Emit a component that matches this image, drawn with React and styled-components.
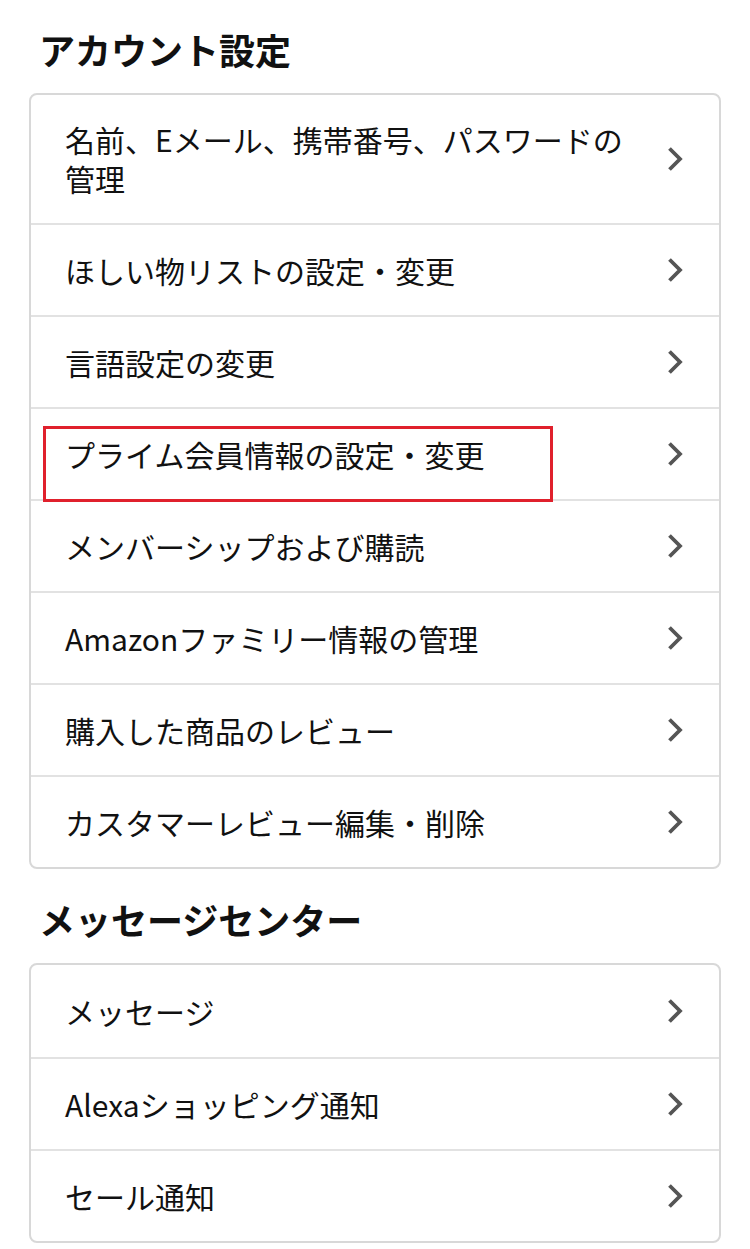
import React from 'react'
import styled, { createGlobalStyle } from 'styled-components';

const sections = [
  {
    title: 'アカウント設定',
    items: [
      { label: '名前、Eメール、携帯番号、パスワードの管理' },
      { label: 'ほしい物リストの設定・変更' },
      { label: '言語設定の変更' },
      { label: 'プライム会員情報の設定・変更', highlight: true },
      { label: 'メンバーシップおよび購読' },
      { label: 'Amazonファミリー情報の管理' },
      { label: '購入した商品のレビュー' },
      { label: 'カスタマーレビュー編集・削除' },
    ],
  },
  {
    title: 'メッセージセンター',
    items: [
      { label: 'メッセージ' },
      { label: 'Alexaショッピング通知' },
      { label: 'セール通知' },
    ],
  },
];

function Chevron() {
  return (
    <ChevronIcon viewBox="0 0 16 26" width="16" height="26">
      <polyline points="2.5,2.5 13,13 2.5,23.5" fill="none" stroke="#555" strokeWidth="3.8" strokeLinecap="butt" strokeLinejoin="miter" />
    </ChevronIcon>
  );
}

function App() {
  return (
    <>
      <GlobalStyle />
      <Page>
        {sections.map((section, i) => (
          <Section key={i} first={i === 0}>
            <Heading>{section.title}</Heading>
            <Card>
              {section.items.map((item, j) => (
                <Row key={j}>
                  <Label highlight={item.highlight}>{item.label}</Label>
                  <Chevron />
                </Row>
              ))}
            </Card>
          </Section>
        ))}
      </Page>
    </>
  );
}

export default App


// ====================
// Styled Components
// ====================

const GlobalStyle = createGlobalStyle`
  body {
    margin: 0;
    background: #fff;
    font-family: "Noto Sans CJK JP", "Noto Sans", sans-serif;
    color: #111;
  }
`;

const Page = styled.div`
  width: 750px;
  padding: 0 29px 0 29px;
  box-sizing: border-box;
`;

const Section = styled.section`
  padding-top: ${props => (props.first ? '26px' : '27px')};
`;

const Heading = styled.h2`
  margin: 0 0 21px 0;
  padding-left: 10px;
  font-size: 36px;
  line-height: 46px;
  font-weight: 700;
  color: #111;
`;

const Card = styled.div`
  border: 2px solid #d8d8d8;
  border-radius: 8px;
  background: #fff;
`;

const Row = styled.div`
  display: flex;
  align-items: center;
  min-height: 92px;
  box-sizing: border-box;
  padding: 25px 36px 25px 34px;

  & + & {
    border-top: 2px solid #e2e2e2;
  }
`;

const Label = styled.span`
  position: relative;
  flex: 0 1 578px;
  margin-right: auto;
  font-size: 30px;
  line-height: 39px;
  color: #111;

  ${props => props.highlight && `
    &::after {
      content: "";
      position: absolute;
      left: -22px;
      top: -9px;
      width: 510px;
      height: 76px;
      box-sizing: border-box;
      border: 3px solid #e0202c;
    }
  `}
`;

const ChevronIcon = styled.svg`
  flex: none;
  display: block;
`;
